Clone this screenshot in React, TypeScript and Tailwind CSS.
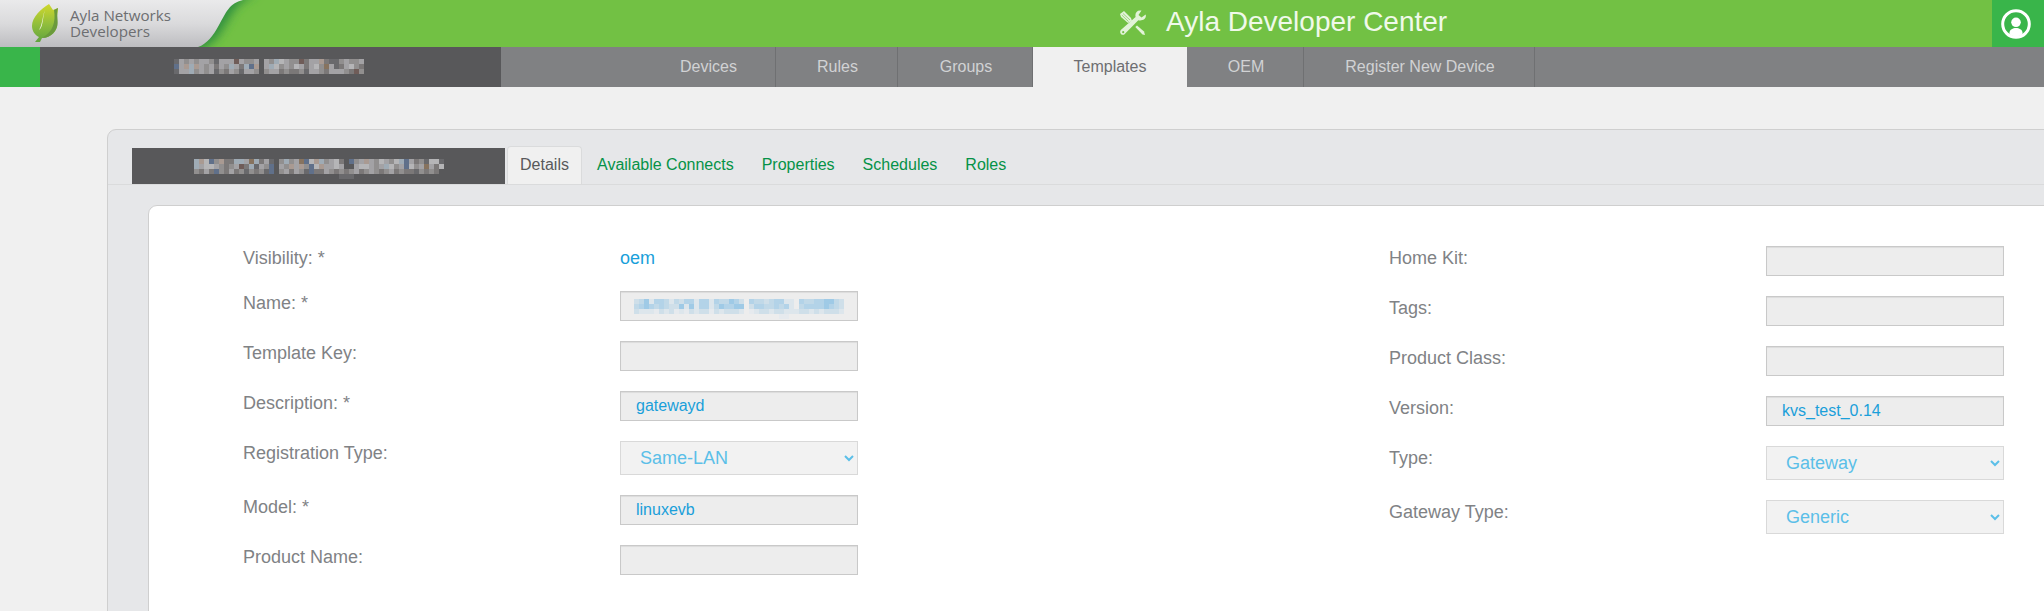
import React from "react";

const darkPalette: Record<string, string> = {
  a: "#b5b5b7", b: "#a3a2a5", c: "#918f8f", d: "#7b7878", e: "#69696c",
  f: "#9fabb5", g: "#a99a92", h: "#60708a", i: "#87735f", j: "#6f5c58",
};
const bluePalette: Record<string, string> = {
  a: "#9fcae6", b: "#b3d3e8", c: "#c1d9e8", d: "#cfdfe9", e: "#dde6ec", f: "#e6eaee",
};

const timeRows = [
  "ebcbcbbcebbbjbccb.bcfabccjdbbgdeecbccb",
  "hbgfgbcbdbcfbdfhg.bfacbcabdbacibedbacd",
  "ebbfcbcbecdbcebbc.cbbdcddcebbcdbbbcdjc",
];
const nameRows = [
  "fgahcgddffbifdbe.cfcbihagfcbad.hcbgbcabcafhbdceaae",
  "fbaabcdcbjdfebch.bcgbgchagbbab..baabcbfacbhacbibda",
  "cdbdhcdbdcecdceh.cbdbcehddbcdcdcbdcbcdcbdcddecdcd.",
  ".............................eee..................",
].map((r) => r.slice(0, 50));
const fieldRows = [
  "dcaebbcecdbbebbe.bccabd.bccdcbbee.bccbbaacd",
  "cbabcbcddaeaebbe.cabbaa.dbbccbcbe.cbbbbabcd",
  "deeefdedfefdeddf.deddde.feddeddeeeddededdde",
  "..............................ff...........",
].map((r) => r.slice(0, 16) + r.slice(17));

function Pixels({ rows, palette }: { rows: string[]; palette: Record<string, string> }) {
  return (
    <svg width={rows[0].length * 5} height={rows.length * 5} shapeRendering="crispEdges" className="block shrink-0">
      {rows.flatMap((r, y) =>
        r.split("").map((ch, x) =>
          palette[ch] ? <rect key={`${x}-${y}`} x={x * 5} y={y * 5} width={5} height={5} fill={palette[ch]} /> : null
        )
      )}
    </svg>
  );
}

const tabs: [string, string][] = [
  ["Devices", "w-[136px]"],
  ["Rules", "w-[122px]"],
  ["Groups", "w-[135px]"],
  ["Templates", "w-[154px]"],
  ["OEM", "w-[117px]"],
  ["Register New Device", "w-[231px]"],
];

type Field = { label: string; kind?: "text" | "select" | "plain" | "pixels"; value?: string };

const left: Field[] = [
  { label: "Visibility: *", kind: "plain", value: "oem" },
  { label: "Name: *", kind: "pixels" },
  { label: "Template Key:" },
  { label: "Description: *", value: "gatewayd" },
  { label: "Registration Type:", kind: "select", value: "Same-LAN" },
  { label: "Model: *", value: "linuxevb" },
  { label: "Product Name:" },
];
const right: Field[] = [
  { label: "Home Kit:" },
  { label: "Tags:" },
  { label: "Product Class:" },
  { label: "Version:", value: "kvs_test_0.14" },
  { label: "Type:", kind: "select", value: "Gateway" },
  { label: "Gateway Type:", kind: "select", value: "Generic" },
];

function Row({ f }: { f: Field }) {
  const h = f.kind === "plain" ? "h-[45px]" : f.kind === "select" ? "h-[54px]" : "h-[50px]";
  return (
    <div className={`flex items-start ${h}`}>
      <div className="w-[377px] text-[18px] leading-6 text-[#808285]">{f.label}</div>
      {f.kind === "plain" ? (
        <div className="text-[18px] leading-6 text-[#1a9fda]">{f.value}</div>
      ) : f.kind === "select" ? (
        <div className="flex h-[34px] w-[238px] items-center justify-between border border-[#d9d9d9] bg-[#f2f2f2] pl-[19px] pr-[3px] text-[18px] leading-8 text-[#5bbfe8]">
          <span>{f.value}</span>
          <svg width="10" height="8" viewBox="0 0 10 8" fill="none" stroke="#5bbfe8" strokeWidth="2"><path d="M1 2l4 4 4-4" /></svg>
        </div>
      ) : f.kind === "pixels" ? (
        <div className="h-[30px] w-[238px] border border-[#c9c9c9] bg-[#ededed] pl-[13px] pt-[7px] shadow-[inset_0_1px_1px_rgba(0,0,0,0.075)]">
          <Pixels rows={fieldRows} palette={bluePalette} />
        </div>
      ) : (
        <div className="h-[30px] w-[238px] border border-[#c9c9c9] bg-[#ededed] pl-[15px] text-[16px] leading-7 text-[#1a9fda] shadow-[inset_0_1px_1px_rgba(0,0,0,0.075)]">
          {f.value}
        </div>
      )}
    </div>
  );
}

export default function App() {
  return (
    <div className="h-[611px] w-[2044px] overflow-hidden bg-[#f0f0f0] font-['Liberation_Sans',sans-serif]">
      <header className="flex h-[47px] items-stretch bg-[#72c144]">
        <svg width="270" height="47" viewBox="0 0 270 47" className="shrink-0">
          <defs>
            <linearGradient id="silver" x1="0" y1="0" x2="0" y2="1"><stop offset="0" stopColor="#eaeaeb" /><stop offset="0.5" stopColor="#dadadc" /><stop offset="1" stopColor="#bdbdc0" /></linearGradient>
            <linearGradient id="leaf" x1="0" y1="0" x2="0" y2="1"><stop offset="0" stopColor="#d0d82c" /><stop offset="0.55" stopColor="#8fbd3d" /><stop offset="1" stopColor="#61a33f" /></linearGradient>
            <filter id="soft" x="-20%" y="-40%" width="140%" height="180%"><feGaussianBlur stdDeviation="5" /></filter>
          </defs>
          <path d="M0 -6H258C236 2 234 12 226 24C219 36 214 44 200 50H0Z" fill="#32913f" filter="url(#soft)" />
          <path d="M0 0H243C229 3 226 13 219 25C213 36 207 44 198 47H0Z" fill="url(#silver)" />
          <path d="M49 4C41 9 32 17 32 26C32 31 35 35 39 37L35 42L40 42L42 38C51 38 58 31 57 23C56 18 58 12 58 8L53 10Z" fill="url(#leaf)" />
          <path d="M54 10L58 8C56 15 59 22 57 27C54 35 47 38 42 38C53 32 56 22 54 10Z" fill="#6b9a3c" />
          <path d="M46 8C42 15 43 24 39 30C44 27 42 15 46 8Z" fill="#f2f5e6" />
          <text x="70" y="21" fontFamily="Open Sans" fontSize="15" fill="#6d6e71" textLength="101" lengthAdjust="spacingAndGlyphs">Ayla Networks</text>
          <text x="70" y="37" fontFamily="Open Sans" fontSize="15" fill="#6d6e71" textLength="80" lengthAdjust="spacingAndGlyphs">Developers</text>
        </svg>
        <div className="flex flex-1 pl-[850px]">
          <svg width="26" height="25" viewBox="0 0 26 25" className="mt-[10px] shrink-0" fill="#e2f3d8">
            <path d="M0 4L4 1L11 8L12 11L8 13L1 7Z" />
            <path d="M3 3.5L10 10M1.8 5L8.5 11.5" stroke="#72c144" strokeWidth="0.6" />
            <path d="M25.7 4.5L21.5 7.5L18.5 5L21.5 0.6C17 -0.4 14.6 3 15.6 7L0.8 20C-1 22.5 1.2 25.6 4 24.7L18.3 10.3C22.7 11.3 26.8 8.7 25.7 4.5Z" />
            <circle cx="3.2" cy="22.2" r="1.1" fill="#72c144" />
            <path d="M15.3 17L17 15.6L24 21.5L25 25L22.5 24.5Z" />
          </svg>
          <h1 className="ml-5 whitespace-nowrap text-[28px] leading-[43px] text-[#f0f9ea]">Ayla Developer Center</h1>
        </div>
        <div className="flex w-[52px] items-center justify-center bg-[#39b54a] pr-[4px] pt-[1px]">
          <svg width="30" height="30" viewBox="0 0 30 30" fill="#fff">
            <circle cx="15" cy="15" r="13.3" fill="none" stroke="#fff" strokeWidth="3" />
            <circle cx="15" cy="13.3" r="4.8" />
            <path d="M8.5 25.5V23.5C9 17.5 21 17.5 21.5 23.5V25.5L15 28Z" />
          </svg>
        </div>
      </header>
      <nav className="flex h-10 bg-[#808183]">
        <div className="w-10 bg-[#39b54a]" />
        <div className="w-[461px] bg-[#58585a] pl-[134px] pt-3">
          <Pixels rows={timeRows} palette={darkPalette} />
        </div>
        <div className="ml-[139px] flex text-[16px] leading-10 text-[#d1d2d4]">
          {tabs.map(([t, w]) => (
            <div key={t} className={`${w} text-center ${t === "Templates" ? "bg-[#f0f0f0] text-[#6d6e71]" : "border-r border-[#6f7072] pl-[2px]"}`}>{t}</div>
          ))}
        </div>
      </nav>
      <main className="ml-[107px] mt-[42px] h-[490px] w-[1960px] rounded-tl-[9px] border border-[#cfcfcf] bg-[#e6e7e9]">
        <div className="flex h-[55px] items-end border-b border-[#dadbdc] pl-6 text-[16px] leading-[38px] text-[#059247]">
          <div className="h-9 w-[373px] bg-[#58585a] pl-[62px] pt-[11px]">
            <Pixels rows={nameRows} palette={darkPalette} />
          </div>
          <div className="ml-[2px] h-[38px] w-[75px] rounded-t border border-b-0 border-[#dadbdc] bg-[#f0f0f0] text-center leading-9 text-[#58595b]">Details</div>
          <div className="ml-[15px]">Available Connects</div>
          <div className="ml-[28px]">Properties</div>
          <div className="ml-[28px]">Schedules</div>
          <div className="ml-[28px]">Roles</div>
        </div>
        <section className="ml-10 mt-5 flex h-[420px] rounded-tl-[9px] border border-[#cfcfcf] bg-white pl-[94px] pt-10">
          <div className="w-[1146px]">{left.map((f) => <Row key={f.label} f={f} />)}</div>
          <div>{right.map((f) => <Row key={f.label} f={f} />)}</div>
        </section>
      </main>
    </div>
  );
}
